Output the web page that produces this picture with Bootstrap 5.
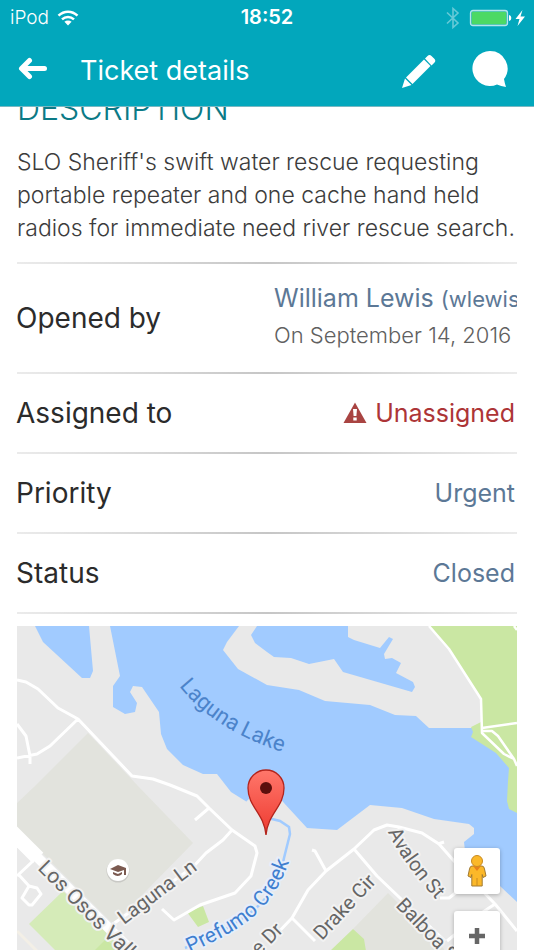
<!DOCTYPE html>
<html lang="en">
<head>
<meta charset="utf-8">
<meta name="viewport" content="width=device-width, initial-scale=1">
<title>Ticket details</title>
<link href="https://cdn.jsdelivr.net/npm/bootstrap@5.3.0/dist/css/bootstrap.min.css" rel="stylesheet">
<style>
  body { font-family: Inter, "Liberation Sans", sans-serif; color: #2b2b2b; overflow: hidden; }
  .app-top { background: #02a7bc; border-bottom: 1px solid #78b8c2; height: 107px; }
  .status-line { height: 35px; padding: 0 8px 0 10px; font-size: 19px; line-height: 35px; }
  .carrier { font-weight: 350; }
  .clock { font-weight: 600; font-size: 20px; }
  .title-line { height: 70px; padding: 0 25px 0 17px; }
  .title-line h1 { font-size: 27px; line-height: 32px; font-weight: 400; margin-left: 32px; padding-top: 2px; }
  .icon-btn { background: none; border: 0; padding: 0; line-height: 0; }
  .edit-btn { margin-right: 34px; }
  .ticket { padding: 91px 17px 0; }
  .section-name { font-size: 32px; line-height: 36px; font-weight: 350; color: #0b7a86; }
  .summary { font-size: 23px; line-height: 33px; font-weight: 350; color: #3c3c3c; margin: 19px -12px 15px 0; }
  .facts > div { min-height: 80px; padding-bottom: 2px; padding-right: 2px; }
  .facts > div.tall { min-height: 110px; padding-right: 0; }
  .ruled { background: linear-gradient(90deg, #ebebeb, #c6c6c6 50%, #ebebeb) bottom / 100% 2px no-repeat; }
  .facts dt { font-size: 28px; line-height: 36px; font-weight: 400; margin-left: -1px; }
  .facts dd { font-size: 25px; line-height: 36px; }
  .facts .tall dd { padding-bottom: 4px; }
  .facts a { color: #5c7896; text-decoration: none; }
  .facts a.alert-link-red { color: #ad3537; }
  .opener { width: 243px; }
  .handle { font-size: 22px; }
  .opened-on { font-size: 22px; font-weight: 350; color: #606060; }
  .map-box { margin-top: 12px; min-height: 325px; background: #e9e9e9; }
  .map-art text { font-family: Roboto, "Liberation Sans", sans-serif; font-size: 20px; fill: #666; stroke: #f2f2f2; stroke-width: 4px; stroke-linejoin: round; paint-order: stroke; }
  .map-art .water-name { fill: #4b83ca; stroke: none; font-size: 22px; }
  .map-art .creek-name { fill: #3f7fd0; stroke: #e6eefa; font-size: 21px; }
  .map-art .avenue-name { font-size: 21px; }
  .map-tools { right: 17px; top: 222px; gap: 17px; }
  .map-tools button { width: 46px; height: 46px; border: 0; border-radius: 3px; background: #fff; padding: 0; box-shadow: 0 1px 4px #0004; }
</style>
</head>
<body>
<header class="app-top fixed-top text-white">
  <div class="status-line d-flex align-items-center justify-content-between position-relative">
    <div class="d-flex align-items-center gap-2">
      <span class="carrier">iPod</span>
      <svg width="22" height="16" viewBox="0 0 22 16" fill="none" stroke="#fff" stroke-width="2.5" aria-hidden="true">
        <path d="M1.5 5.7C7 .3 15 .3 20.5 5.7M5 9.3c3.500-3.200 8.500-3.200 12 0"/><path d="M11 15.500l-3.600-3.700c2-1.700 5.200-1.700 7.200 0z" fill="#fff" stroke="none"/>
      </svg>
    </div>
    <span class="clock position-absolute start-50 translate-middle-x">18:52</span>
    <div class="d-flex align-items-center">
      <svg width="14" height="24" viewBox="0 0 14 24" fill="none" stroke="#66cad7" stroke-width="1.600" aria-hidden="true"><path d="M1 6.500l11 10.500-5 4.500V2.500l5 4.500L1 17.500"/></svg>
      <svg width="66" height="20" viewBox="0 0 66 20" aria-hidden="true"><rect x="10.500" y="2.500" width="37" height="15" rx="2.500" fill="#37bfa5" stroke="#b4e5ec" stroke-width="1.300"/><rect x="12" y="4" width="34" height="12" rx="1" fill="#4cd964"/><path d="M49 7c3 .5 3 5.500 0 6z" fill="#fff"/><path d="M62.500 2l-7 9h4l-2 7 7.500-9.500h-4.500z" fill="#fff"/></svg>
    </div>
  </div>
  <div class="title-line d-flex align-items-center">
    <button class="icon-btn" aria-label="Back"><svg width="31" height="26" viewBox="0 0 31 26" fill="none" stroke="#fff" stroke-width="5" stroke-linecap="round" stroke-linejoin="round"><path d="M12.500 3.500L4.500 11.500l8 8M5.500 11.500H27.500"/></svg></button>
    <h1 class="mb-0 flex-fill">Ticket details</h1>
    <button class="icon-btn edit-btn" aria-label="Edit ticket"><svg width="36" height="36" viewBox="8 0 36 36" fill="#fff"><path d="M9 36l3-9.500 6.500 6.500zM13 25.500L31 7.500l6.500 6.500L19.500 32zM32 6.500l2.500-2.500q2-2 4 0l2.800 2.800q2 2 0 4l-2.800 2.700z"/></svg></button>
    <button class="icon-btn" aria-label="Comments"><svg width="38" height="38" viewBox="0 1 38 38" fill="#fff"><path d="M19 1a17.500 17.500 0 1 0 7 33.500q4 1.500 9 2.500-1.500-4.500-2-8A17.500 17.500 0 0 0 19 1z"/></svg></button>
  </div>
</header>

<main class="ticket d-flex flex-column min-vh-100">
  <h2 class="section-name mb-0">DESCRIPTION</h2>
  <p class="summary">SLO Sheriff's swift water rescue requesting<br>portable repeater and one cache hand held<br>radios for immediate need river rescue search.</p>
  <div class="ruled pt-1"></div>
  <dl class="facts mb-0">
    <div class="tall ruled d-flex align-items-center justify-content-between">
      <dt>Opened by</dt>
      <dd class="opener mb-0 overflow-hidden text-nowrap"><a href="#wlewis">William Lewis <span class="handle">(wlewis)</span></a><div class="opened-on">On September 14, 2016</div></dd>
    </div>
    <div class="ruled d-flex align-items-center justify-content-between">
      <dt>Assigned to</dt>
      <dd class="mb-0"><a class="alert-link-red d-flex align-items-center gap-2" href="#assign"><svg width="24" height="22" viewBox="0 0 24 22" aria-hidden="true"><path d="M12 .5L23.500 21H.5z" fill="#a94442"/><path d="M10 7h4l-.6 7h-2.800zM10.300 15.500h3.400v3h-3.400z" fill="#fff"/></svg>Unassigned</a></dd>
    </div>
    <div class="ruled d-flex align-items-center justify-content-between">
      <dt>Priority</dt>
      <dd class="mb-0"><a href="#priority">Urgent</a></dd>
    </div>
    <div class="ruled d-flex align-items-center justify-content-between">
      <dt>Status</dt>
      <dd class="mb-0"><a href="#status">Closed</a></dd>
    </div>
  </dl>

  <section class="map-box position-relative overflow-hidden d-grid flex-fill" aria-label="Map">
    <svg class="map-art w-100 h-100" viewBox="17 625 500 325" preserveAspectRatio="xMinYMin slice">
      <defs>
        <linearGradient id="pinRed" x1="0" y1="0" x2="0" y2="1"><stop offset="0" stop-color="#ff776b"/><stop offset="1" stop-color="#ee3a30"/></linearGradient>
        <path id="lakeLine" d="M179 685Q217 733 296 755"/>
        <path id="creekLine" d="M190 952C250 924 276 908 294 845"/>
        <path id="avalonLine" d="M388 831Q402 862 442 905"/>
      </defs>
      <!-- school grounds and blocks -->
      <path fill="#e2e3dd" d="M88 732L35 785 17 802V827L113 923 147 889 193 842 138 785zM388 892L353 928 366 950H446z"/>
      <!-- water -->
      <path fill="#a1cbff" d="M35 625L43 641 82 677H90L93 670 89 625zM110 625L120 675 113 685V706L125 713 135 711 137 702 130 691 133 685 142 686 159 711 161 733 167 748 183 764 203 773H217L231 791 247 801 262 816 284 802 307 827 337 829 370 804 402 807 434 818 469 823 474 827V833L464 841 465 850 500 885 517 901V625H257L251 634 255 642 267 651 274 656 291 657 309 663 334 658 343 671 412 691 415 686 413 681 396 672 401 662 392 657 385 658 384 653 393 638 389 636 380 647 354 639 348 636V625z"/>
      <path fill="#e9e9e9" d="M239 625H257L251 634 255 642 267 651 274 656 291 657 309 663 334 658 343 671 412 691 415 686 413 681 396 672 401 662 392 657 385 658 384 653 393 638 389 636 380 647 354 639 348 636V625H517V727H429L416 715 395 714 370 704 325 700 299 689 267 684 238 668 223 649 227 641zM246 801L266 780 284 802V850H266L258 813z"/>
      <!-- parks -->
      <path fill="#cae7a3" d="M429 625L449 648 481 698V721L471 726 473 731 471 736 496 752 509 767 508 780 507 800 509 808 517 812V625zM187 911L203 905 209 921 198 926zM353 928L364 938 366 950H330z"/>
      <path fill="#d5ebb8" d="M63 890L29 923 56 950H125z"/>
      <path fill="#cae7a3" d="M105 939L94 950H125z"/>
      <path fill="none" stroke="#a1cbff" stroke-width="2.500" d="M268 817L280 820 289 826 290 833 284 857C276 898 250 920 185 947"/>
      <!-- roads -->
      <g fill="none" stroke="#fff" stroke-width="3" stroke-linejoin="round">
        <path d="M17 679L26 681 38 688 58 707 78 718 132 775 153 778 170 784 197 795 209 807 232 829 255 845 257 852 251 875 235 892 200 904 174 919 162 908M209 807L195 819M232 829L223 839 206 852 193 866 113 923M78 718L50 745 37 753 17 757M17 723L26 735 30 755V763M33 860L17 875M19 874L29 885 37 887 41 893 32 904H29L22 897 29 885"/>
        <path d="M270 940L292 917 308 889 326 870 354 848 374 829 387 824 399 826 422 832 439 843 454 860 495 903 517 930M312 849L315 850 326 870M438 843L444 841M399 826V835M354 848L377 875 445 940M292 917L315 940M495 903L480 913 447 940M440 897H449L458 890"/>
        <path d="M429 625L449 648 481 698 482 732 504 753 514 758 517 765M482 730L492 730 498 735 514 758M482 727L517 722M514 625L517 629" stroke-width="2.500"/>
        <path d="M10 829L38 857" stroke-width="15"/><path d="M32 851L132 950" stroke-width="10"/>
        <path d="M17 930L37 950" stroke="#f3efe6" stroke-width="3"/>
      </g>
      <!-- place names -->
      <text class="water-name"><textPath href="#lakeLine">Laguna Lake</textPath></text>
      <text class="creek-name"><textPath href="#creekLine">Prefumo Creek</textPath></text>
      <text><textPath href="#avalonLine">Avalon St</textPath></text>
      <text transform="translate(124 924) rotate(-37)">Laguna Ln</text>
      <text class="avenue-name" transform="translate(37 868) rotate(45)">Los Osos Valley</text>
      <text transform="translate(322 940) rotate(-47)">Drake Cir</text>
      <text transform="translate(395 905) rotate(46)">Balboa St</text>
      <text transform="translate(259 955) rotate(-45)">e Dr</text>
      <!-- school marker -->
      <circle cx="118" cy="870" r="11.500" fill="#c9c9c5"/><circle cx="118" cy="869" r="11" fill="#fff"/>
      <path fill="#7b5a50" d="M110 868L118 864 126 867V874H124V869L118 871zM113 871L118 873 122 871V873Q118 877 113 873z"/>
      <!-- ticket pin -->
      <path d="M266 834C264 812 248 806 248 787a18 18 0 0 1 36 0C284 806 268 812 266 834z" fill="url(#pinRed)" stroke="#b3241c" stroke-width="1.300"/><circle cx="266" cy="787" r="6" fill="#5c0f0c"/>
    </svg>
    <div class="map-tools position-absolute d-flex flex-column">
      <button aria-label="Street view"><svg width="20" height="34" viewBox="0 0 20 34"><path d="M5 12h10q2 0 2.500 3l1.500 7-3 1.500-.8-3V32H4.800V20.500l-.8 3L1 22l1.500-7Q3 12 5 12z" fill="#fbb829" stroke="#a17a32" stroke-width="1"/><path d="M6 12h8l-4 5z" fill="#e8811a"/><path d="M10 24v8" stroke="#c98a20"/><circle cx="10" cy="7" r="5.500" fill="#fbb829" stroke="#c98a20"/></svg></button>
      <button aria-label="Zoom in"><svg width="18" height="18" viewBox="0 0 18 18"><path d="M9 1v16M1 9h16" stroke="#666" stroke-width="4.500"/></svg></button>
    </div>
  </section>
</main>
<script src="https://cdn.jsdelivr.net/npm/bootstrap@5.3.0/dist/js/bootstrap.bundle.min.js"></script>
</body>
</html>
